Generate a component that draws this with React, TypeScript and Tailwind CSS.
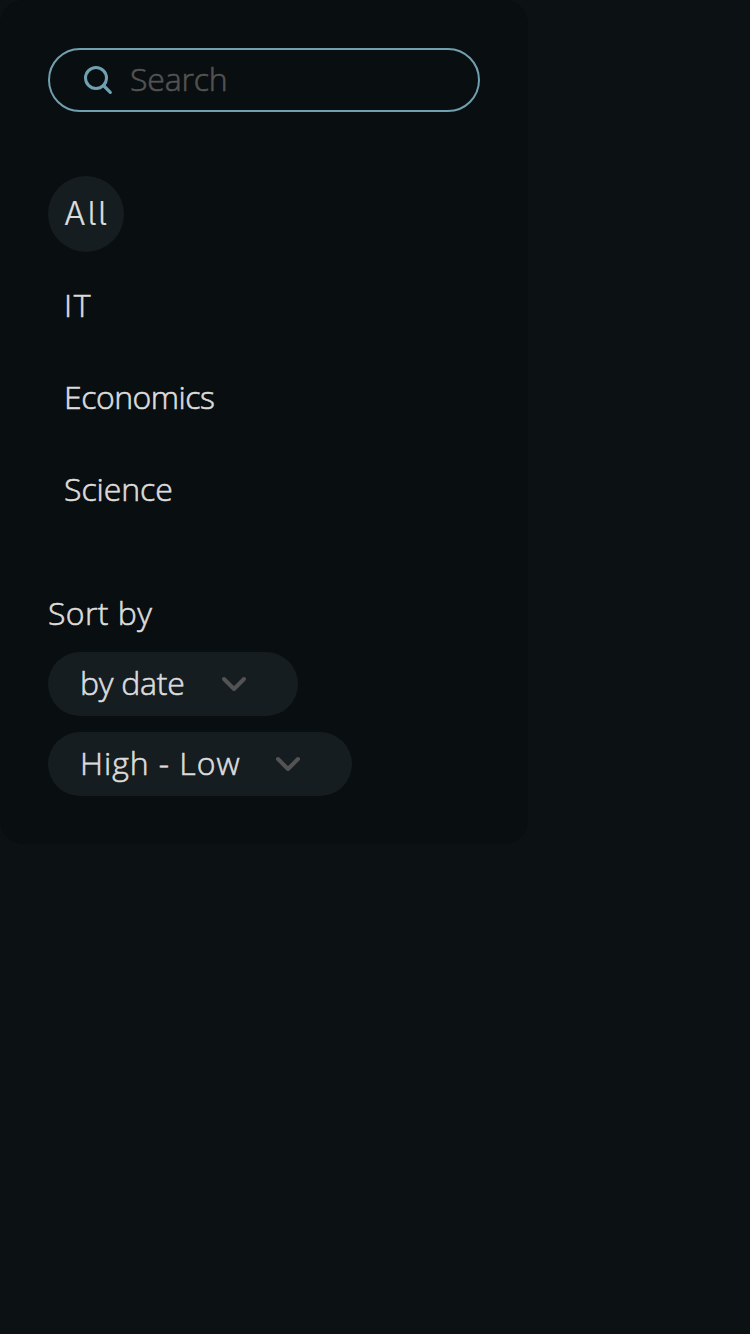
const categories = [
  { name: 'All', text: "pb-0 font-['Inter','Open_Sans',sans-serif] text-[32px] tracking-[2.2px] [-webkit-text-stroke:0.2px] [font-feature-settings:'cv05']", active: true },
  { name: 'IT', text: 'pb-0.5 tracking-[1.8px]', active: false },
  { name: 'Economics', text: 'pb-0.5 tracking-[-0.5px]', active: false },
  { name: 'Science', text: 'pb-0.5 tracking-[-0.05px]', active: false },
];

function SearchIcon() {
  return (
    <svg className="h-8 w-8 shrink-0" viewBox="0 0 32 32" fill="none" stroke="#71a0b0" strokeWidth="3">
      <circle cx="14" cy="14" r="10.5" />
      <path d="M21.5 21.5 L28.3 28.3" strokeWidth="3.2" strokeLinecap="round" />
    </svg>
  );
}

function Chevron() {
  return (
    <svg className="h-8 w-8 shrink-0" viewBox="0 0 32 32" fill="none" stroke="#535353" strokeWidth="4" strokeLinecap="round" strokeLinejoin="round">
      <path d="M6 11 L16 21 L26 11" />
    </svg>
  );
}

function Select({ label, width, tracking }: { label: string; width: string; tracking: string }) {
  return (
    <button className={`flex h-16 items-center justify-between rounded-full bg-[#161d20] pr-12 pl-8 ${width}`}>
      <span className={`pb-0.5 whitespace-nowrap ${tracking}`}>{label}</span>
      <Chevron />
    </button>
  );
}

export default function App() {
  return (
    <div className="h-[1334px] w-[750px] overflow-hidden bg-[#0c1113] font-['Open_Sans','Noto_Sans',sans-serif] text-[32px] leading-[44px] font-light text-[#dcdcdc] [-webkit-text-stroke:0.6px]">
      <aside className="h-[844px] w-[528px] rounded-3xl bg-[#090e10] p-12">
        <label className="flex h-16 items-center rounded-full border-2 border-[#71a0b0] pl-8">
          <SearchIcon />
          <input
            className="ml-4 w-72 bg-transparent pb-0.5 tracking-[-0.2px] outline-none [-webkit-text-stroke:0.6px_#535353] placeholder:text-[#535353]"
            placeholder="Search"
          />
        </label>
        <nav className="mt-16 flex flex-col items-start gap-4">
          {categories.map((c) => (
            <button
              key={c.name}
              className={`flex h-[76px] items-center rounded-full pl-4 ${c.active ? 'w-[76px] bg-[#161d20]' : ''}`}
            >
              <span className={c.text}>{c.name}</span>
            </button>
          ))}
        </nav>
        <div className="mt-[63px] flex flex-col items-start">
          <span className="pb-px tracking-[0.4px]">Sort by</span>
          <div className="mt-4 flex flex-col items-start gap-4">
            <Select label="by date" width="w-[250px]" tracking="tracking-[-0.25px]" />
            <Select label="High - Low" width="w-[304px]" tracking="tracking-[0.95px]" />
          </div>
        </div>
      </aside>
    </div>
  );
}
